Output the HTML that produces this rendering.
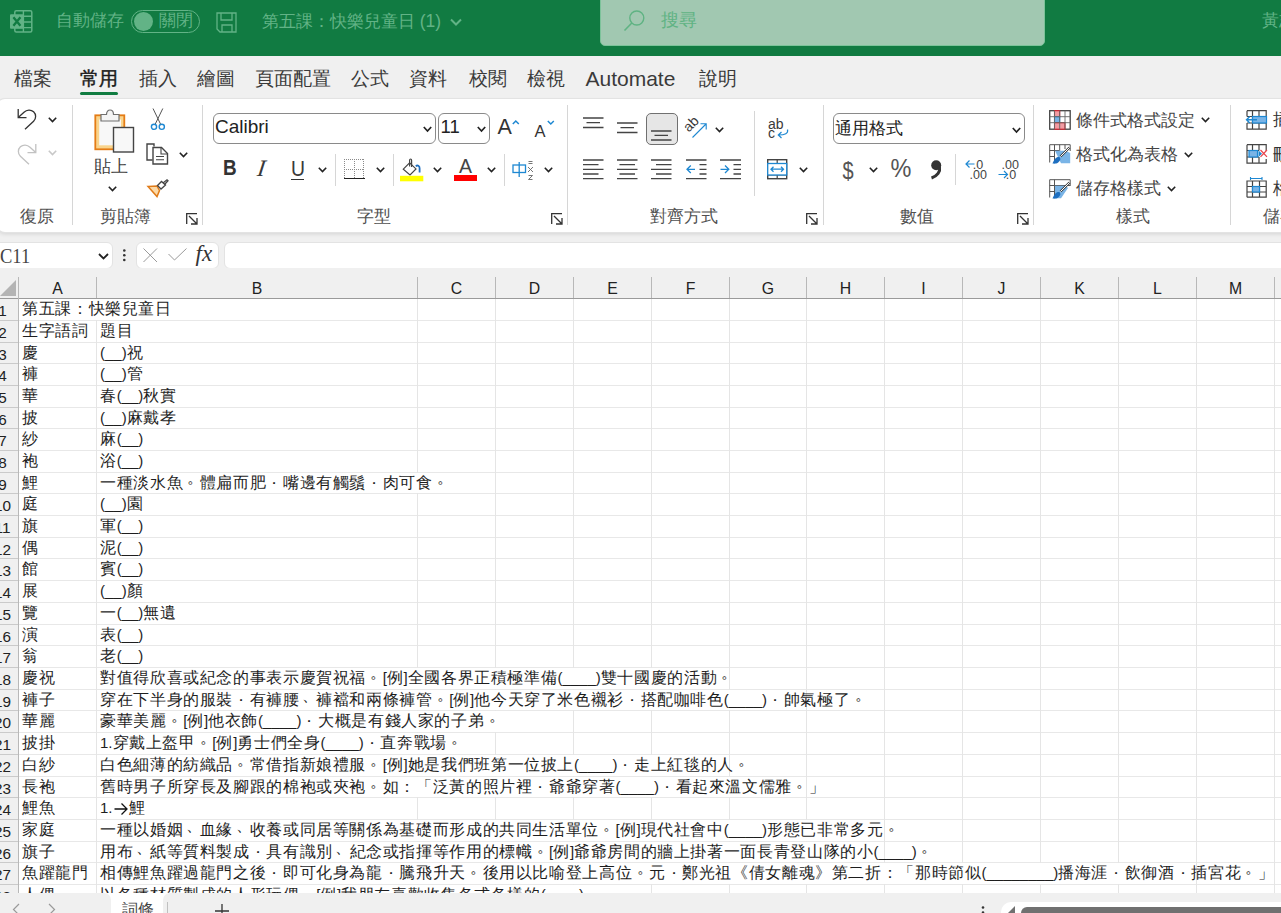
<!DOCTYPE html><html><head><meta charset="utf-8"><style>
*{box-sizing:border-box}
html,body{margin:0;padding:0}
body{width:1281px;height:913px;overflow:hidden;position:relative;background:#f0f0f0;font-family:"Liberation Sans",sans-serif;color:#242424}
.a{position:absolute;white-space:nowrap}
#title{position:absolute;left:0;top:0;width:1281px;height:56px;background:#117b42;overflow:hidden}
#title .t{position:absolute;white-space:nowrap;color:#62b386;font-size:17px;line-height:20px}
#search{position:absolute;left:600px;top:-8px;width:445px;height:53.5px;background:#a1c8b1;border-radius:5px;border:1px solid #7cc39a}
#tabs .tb{position:absolute;top:67.5px;font-size:18.5px;line-height:22px;color:#3a3a3a;white-space:nowrap}
#ribbon{position:absolute;left:-3px;top:99px;width:1300px;height:133px;background:#fff;border-radius:8px;box-shadow:0 0 0 1px #e3e3e3,0 2px 4px rgba(0,0,0,0.12)}
.sep{position:absolute;width:1px;background:#d6d6d6}
.glabel{position:absolute;top:206px;font-size:16.5px;line-height:20px;color:#505050;white-space:nowrap}
.rt{position:absolute;font-size:16.5px;line-height:20px;color:#404040;white-space:nowrap}
svg{position:absolute;overflow:visible}
.combo{position:absolute;top:112.5px;height:31px;border:1px solid #8a8a8a;border-radius:6px;background:#fff}
#fbar .box{position:absolute;top:241.5px;height:27px;background:#fff;border:1px solid #e3e3e3;border-radius:6px}
#colhdr{position:absolute;left:0;top:268px;width:1281px;height:31px;background:#f0f0f0}
#colhdr .ch{position:absolute;top:10.5px;height:20px;font-size:15.8px;line-height:20px;text-align:center;color:#222}
#colhdr .chl{position:absolute;top:9px;width:1px;height:21.5px;background:#b8b8b8}
#colhdr .selall{left:0;top:9px}
#grid{position:absolute;left:0;top:0;width:1281px;height:893px;pointer-events:none}
#sheetbg{position:absolute;left:0;top:298px;width:1281px;height:595px;background:#fff}
.hl{position:absolute;left:0;width:1281px;height:1px;background:#e8e8e8}
.vl{position:absolute;top:299px;width:1px;height:594px;background:#e5e5e5}
.cell{position:absolute;background:#fff;font-size:16px;letter-spacing:.63px;line-height:20px;padding-left:3px;white-space:nowrap;color:#1e1e1e;overflow:visible}
.cell .l{font-size:15px;letter-spacing:0}
.rn{position:absolute;left:-12.5px;width:30px;font-size:15.3px;line-height:24px;text-align:center;background:#f0f0f0;color:#222}
#hdrline{position:absolute;left:0;top:297.5px;width:1281px;height:1.5px;background:#9a9a9a}
#rhline{position:absolute;left:18px;top:298px;width:1px;height:595px;background:#b8b8b8}
#bottom{position:absolute;left:0;top:893px;width:1281px;height:20px;background:#fff}
.p1{position:relative;left:.27em;top:-.33em}
.p2{position:relative;left:0;top:-.28em}
.p3{position:relative;left:.165em;top:-.26em}
.ar{display:inline-block;position:relative;width:16px;height:14px;margin-right:0}
.ar svg{left:0;top:3px}
.rhl{position:absolute;left:0;width:18px;height:1px;background:#cacaca}

</style></head><body>
<div id="title">
  <svg style="left:0;top:0" width="40" height="40" viewBox="0 0 40 40"><rect x="14.8" y="10.8" width="17" height="21.3" rx="1.5" fill="none" stroke="#62b386" stroke-width="1.5"/><path d="M23.4 10.8V32M14.8 16.2H31.8M14.8 22H31.8M14.8 27.6H31.8" stroke="#62b386" stroke-width="1.4"/><rect x="10" y="14.3" width="13.7" height="14.4" rx="1" fill="#62b386"/><path d="M13.4 17.2L20.4 25.8M20.4 17.2L13.4 25.8" stroke="#117b42" stroke-width="2.3"/></svg>
  <div class="t" style="left:56px;top:11px">自動儲存</div>
  <div style="position:absolute;left:131px;top:10px;width:69px;height:23px;border:1.3px solid #62b386;border-radius:12px"></div>
  <div style="position:absolute;left:134px;top:12px;width:19px;height:19px;border-radius:50%;background:#62b386"></div>
  <div class="t" style="left:159px;top:11px">關閉</div>
  <svg style="left:216px;top:12px" width="22" height="21" viewBox="0 0 22 21"><path d="M1 1H20V20H4L1 17Z" fill="none" stroke="#62b386" stroke-width="1.3"/><path d="M5 1V8H16V1M6 20V13H16V20" fill="none" stroke="#62b386" stroke-width="1.3"/></svg>
  <div class="t" style="left:262px;top:11px">第五課：快樂兒童日 <span style="font-size:17.5px">(1)</span></div>
  <svg style="left:450px;top:18px" width="12" height="8" viewBox="0 0 12 8"><path d="M1 1.5L6 6.5L11 1.5" fill="none" stroke="#62b386" stroke-width="2"/></svg>
  <div id="search"></div>
  <svg style="left:620px;top:8px" width="26" height="26" viewBox="0 0 26 26"><circle cx="16.8" cy="10" r="7" fill="none" stroke="#5fb383" stroke-width="1.4"/><path d="M11.8 15L4.5 22.5" stroke="#5fb383" stroke-width="1.6"/></svg>
  <div class="t" style="left:660.5px;top:9.5px;color:#5fb383;font-size:18px">搜尋</div>
  <div class="t" style="left:1262px;top:11px">黃志</div>
</div>
<div id="tabs">
  <div class="tb" style="left:14px">檔案</div>
  <div class="tb" style="left:80px;color:#1a1a1a;-webkit-text-stroke:.45px #1a1a1a">常用</div>
  <div style="position:absolute;left:80px;top:92px;width:38px;height:3px;border-radius:2px;background:#107c41"></div>
  <div class="tb" style="left:139px">插入</div>
  <div class="tb" style="left:197px">繪圖</div>
  <div class="tb" style="left:255px">頁面配置</div>
  <div class="tb" style="left:351px">公式</div>
  <div class="tb" style="left:409px">資料</div>
  <div class="tb" style="left:469px">校閱</div>
  <div class="tb" style="left:527px">檢視</div>
  <div class="tb" style="left:585.5px;font-size:21px">Automate</div>
  <div class="tb" style="left:699px">說明</div>
</div>
<div id="ribbon"></div>
<div id="rb">
<!-- group 1: undo -->
<svg style="left:17px;top:108px" width="20" height="22" viewBox="0 0 20 22"><path d="M1.2 1V9.6H9.5" fill="none" stroke="#333" stroke-width="1.3"/><path d="M1.5 9.3L7 4.2C9.8 1.5 13.9 1.3 16.6 3.8C19.3 6.3 19.3 10.6 16.6 13.2L8 21.3" fill="none" stroke="#333" stroke-width="1.3"/></svg>
<svg style="left:47.5px;top:117px" width="9" height="6" viewBox="0 0 9 6"><path d="M0.8 0.8L4.5 4.5L8.2 0.8" fill="none" stroke="#222" stroke-width="1.6"/></svg>
<svg style="left:17px;top:142.5px" width="20" height="22" viewBox="0 0 20 22"><path d="M18.8 1V9.6H10.5" fill="none" stroke="#c2c2c2" stroke-width="1.3"/><path d="M18.5 9.3L13 4.2C10.2 1.5 6.1 1.3 3.4 3.8C0.7 6.3 0.7 10.6 3.4 13.2L12 21.3" fill="none" stroke="#c2c2c2" stroke-width="1.3"/></svg>
<svg style="left:47.5px;top:150px" width="9" height="6" viewBox="0 0 9 6"><path d="M0.8 0.8L4.5 4.5L8.2 0.8" fill="none" stroke="#c8c8c8" stroke-width="1.6"/></svg>
<div class="glabel" style="left:19.5px">復原</div>
<div class="sep" style="left:72px;top:104.5px;height:120px"></div>
<!-- group 2: clipboard -->
<svg style="left:94px;top:109px" width="41" height="45" viewBox="0 0 41 45"><rect x="1.3" y="6.3" width="29" height="34" fill="#f9d48c" stroke="#e47c16" stroke-width="1.8"/><rect x="5.2" y="10.5" width="21.8" height="25.8" fill="#f8f8f8"/><path d="M7 12V5.5H12.5C12.5 2.6 14.2 1 16 1C17.8 1 19.5 2.6 19.5 5.5H25V12Z" fill="#f4f4f4" stroke="#707070" stroke-width="1.2"/><rect x="19.5" y="18.5" width="20" height="24.5" fill="#f8f8f8" stroke="#444" stroke-width="1.4"/></svg>
<div class="rt" style="left:93.5px;top:155.5px">貼上</div>
<svg style="left:107.5px;top:186px" width="9" height="6" viewBox="0 0 9 6"><path d="M0.8 0.8L4.5 4.5L8.2 0.8" fill="none" stroke="#222" stroke-width="1.6"/></svg>
<svg style="left:150px;top:108px" width="16" height="23" viewBox="0 0 16 23"><path d="M3 0.5L10.5 16M12.8 0.5L5.3 16" stroke="#555" stroke-width="1"/><circle cx="4" cy="18.8" r="2.6" fill="#fff" stroke="#1e88d2" stroke-width="1.4"/><circle cx="11.8" cy="18.8" r="2.6" fill="#fff" stroke="#1e88d2" stroke-width="1.4"/></svg>
<svg style="left:146px;top:142.5px" width="23" height="22" viewBox="0 0 23 22"><path d="M8 3.5V1H1V17H6.5" fill="none" stroke="#444" stroke-width="1.4"/><path d="M7 4.5H15.5L21.5 10.5V21H7Z" fill="#fff" stroke="#444" stroke-width="1.4"/><path d="M15 4.5V11H21.5M10 13.5H18M10 16.8H18" fill="none" stroke="#444" stroke-width="1.1"/></svg>
<svg style="left:178.5px;top:151.5px" width="9" height="6" viewBox="0 0 9 6"><path d="M0.8 0.8L4.5 4.5L8.2 0.8" fill="none" stroke="#222" stroke-width="1.6"/></svg>
<svg style="left:147px;top:178.5px" width="22" height="18" viewBox="0 0 22 18"><path d="M1 7.5L10 7L12.5 11.5L10 17.5Z" fill="#fcd9a6" stroke="#e07b19" stroke-width="1.5"/><path d="M10.5 6.5L14.5 2.5L18.5 6L14 10Z" fill="#fff" stroke="#444" stroke-width="1.3"/><path d="M16 4L20 0.8L21 1.8L17.5 5.5" fill="none" stroke="#444" stroke-width="1.3"/></svg>
<div class="glabel" style="left:100px">剪貼簿</div>
<svg style="left:186px;top:212.5px" width="12" height="12" viewBox="0 0 12 12"><path d="M0.7 11V0.7H11M3 3L11 11M5 11H11V5" fill="none" stroke="#333" stroke-width="1.3"/></svg>
<div class="sep" style="left:202px;top:104.5px;height:120px"></div>
<!-- group 3: font -->
<div class="combo" style="left:213px;width:222.5px"></div>
<div class="rt" style="left:215px;top:117px;font-size:19px;line-height:20px;color:#222">Calibri</div>
<svg style="left:422.5px;top:125.5px" width="9" height="7" viewBox="0 0 9 7"><path d="M0.8 1L4.5 5L8.2 1" fill="none" stroke="#222" stroke-width="1.7"/></svg>
<div class="combo" style="left:438px;width:52px"></div>
<div class="rt" style="left:440.5px;top:117px;font-size:18.5px;line-height:20px;color:#222">11</div>
<svg style="left:477px;top:125.5px" width="9" height="7" viewBox="0 0 9 7"><path d="M0.8 1L4.5 5L8.2 1" fill="none" stroke="#222" stroke-width="1.7"/></svg>
<div class="rt" style="left:497.5px;top:116px;font-size:21.5px;line-height:22px;color:#333">A</div>
<svg style="left:512px;top:119.5px" width="8" height="5" viewBox="0 0 8 5"><path d="M0.8 4L3.8 1L6.8 4" fill="none" stroke="#1e88d2" stroke-width="1.5"/></svg>
<div class="rt" style="left:534.5px;top:122px;font-size:16.5px;line-height:18px;color:#333">A</div>
<svg style="left:546.5px;top:119.5px" width="8" height="5" viewBox="0 0 8 5"><path d="M0.8 1L3.8 4L6.8 1" fill="none" stroke="#1e88d2" stroke-width="1.5"/></svg>
<div class="rt" style="left:222.5px;top:157px;font-size:22.5px;line-height:22px;font-weight:bold;color:#333;transform:scaleX(.84);transform-origin:0 0">B</div>
<div class="rt" style="left:256px;top:157px;font-size:23.5px;line-height:22px;font-family:'Liberation Serif',serif;font-style:italic;color:#3a3a3a;transform:skewX(-8deg);transform-origin:0 100%">I</div>
<div class="rt" style="left:290.5px;top:157.5px;font-size:21.5px;line-height:22px;color:#3a3a3a;transform:scaleX(.9);transform-origin:0 0">U</div>
<div style="position:absolute;left:290.5px;top:178.5px;width:13.5px;height:1.3px;background:#333"></div>
<svg style="left:318px;top:167px" width="9" height="6" viewBox="0 0 9 6"><path d="M0.8 0.8L4.5 4.5L8.2 0.8" fill="none" stroke="#222" stroke-width="1.6"/></svg>
<div class="sep" style="left:335px;top:154px;height:31.5px"></div>
<svg style="left:344px;top:159px" width="21" height="21" viewBox="0 0 21 21" shape-rendering="crispEdges"><path d="M0 0.5H20M0.5 0V19M10.5 0V19M19.5 0V19M0 10.5H20" fill="none" stroke="#8a8a8a" stroke-width="1" stroke-dasharray="1 1"/><path d="M0 19.5H20.5" stroke="#222" stroke-width="1.6"/></svg>
<svg style="left:375.5px;top:167px" width="9" height="6" viewBox="0 0 9 6"><path d="M0.8 0.8L4.5 4.5L8.2 0.8" fill="none" stroke="#222" stroke-width="1.6"/></svg>
<div class="sep" style="left:393px;top:154px;height:31.5px"></div>
<svg style="left:400px;top:157.5px" width="24" height="24" viewBox="0 0 24 24"><path d="M3.3 11.1L9.6 4.8L16 10.9L10 17Z" fill="#fff" stroke="#444" stroke-width="1.2"/><path d="M9.6 8.5V2.2C9.6 0.6 11.6 0.6 11.6 2.2V9" fill="none" stroke="#444" stroke-width="1.2"/><path d="M15.8 8.2C17.5 6.8 19.8 7.8 19.6 10.5V14.5" fill="none" stroke="#1e6fc0" stroke-width="1.8"/><rect x="0" y="17.8" width="23.3" height="5.5" fill="#ffff00"/></svg>
<svg style="left:432.5px;top:167px" width="9" height="6" viewBox="0 0 9 6"><path d="M0.8 0.8L4.5 4.5L8.2 0.8" fill="none" stroke="#222" stroke-width="1.6"/></svg>
<div class="rt" style="left:459px;top:156px;font-size:19.5px;line-height:20px;color:#444">A</div>
<div style="position:absolute;left:454px;top:175.3px;width:23px;height:5.5px;background:#ff0000"></div>
<svg style="left:486.5px;top:167px" width="9" height="6" viewBox="0 0 9 6"><path d="M0.8 0.8L4.5 4.5L8.2 0.8" fill="none" stroke="#222" stroke-width="1.6"/></svg>
<div class="sep" style="left:504px;top:154px;height:31.5px"></div>
<svg style="left:512px;top:160px" width="23" height="21" viewBox="0 0 23 21"><rect x="1" y="5" width="12.5" height="7.5" fill="none" stroke="#1e88d2" stroke-width="1.3"/><path d="M7.2 2V17" stroke="#1e88d2" stroke-width="1.3"/><path d="M16.5 1.5H20.5M16.5 3.5H20.5M16 7L21 12M21 7L16 12M16.5 15.5L20.5 15.5L16.5 19.5H20.5" fill="none" stroke="#666" stroke-width="0.9"/></svg>
<svg style="left:543.5px;top:167px" width="9" height="6" viewBox="0 0 9 6"><path d="M0.8 0.8L4.5 4.5L8.2 0.8" fill="none" stroke="#222" stroke-width="1.6"/></svg>
<div class="glabel" style="left:356.5px">字型</div>
<svg style="left:550.5px;top:212.5px" width="12" height="12" viewBox="0 0 12 12"><path d="M0.7 11V0.7H11M3 3L11 11M5 11H11V5" fill="none" stroke="#333" stroke-width="1.3"/></svg>
<div class="sep" style="left:567px;top:104.5px;height:120px"></div>
<!-- group 4: alignment -->
<svg style="left:582.5px;top:116.5px" width="21" height="12" viewBox="0 0 21 12"><path d="M0 1H20.5M3.5 5.7H17M0 10.5H20.5" stroke="#444" stroke-width="1.3"/></svg>
<svg style="left:617px;top:122px" width="21" height="12" viewBox="0 0 21 12"><path d="M0 1H20.5M3.5 5.7H17M0 10.5H20.5" stroke="#444" stroke-width="1.3"/></svg>
<div style="position:absolute;left:646px;top:112.5px;width:31.5px;height:32px;border:1.3px solid #707070;border-radius:5px;background:#e6e6e6"></div>
<svg style="left:651px;top:129.5px" width="21" height="12" viewBox="0 0 21 12"><path d="M0 1H20.5M3.5 5.4H17M0 10H20.5" stroke="#444" stroke-width="1.3"/></svg>
<svg style="left:685.5px;top:117.5px" width="22" height="21" viewBox="0 0 22 21"><text x="0" y="0" font-family="Liberation Sans" font-size="14" fill="#3a3a3a" transform="translate(2.8 14.8) rotate(-45)">ab</text><path d="M6.5 19.5L20 6M14.5 5.8H20.2V11.5" fill="none" stroke="#1e88d2" stroke-width="1.1"/></svg>
<svg style="left:714.5px;top:126.5px" width="9" height="6" viewBox="0 0 9 6"><path d="M0.8 0.8L4.5 4.5L8.2 0.8" fill="none" stroke="#222" stroke-width="1.6"/></svg>
<svg style="left:582.5px;top:159px" width="21" height="21" viewBox="0 0 21 21"><path d="M0 1H20.5M0 5.7H15.5M0 10.3H20.5M0 15H15.5M0 19.7H20.5" stroke="#444" stroke-width="1.3"/></svg>
<svg style="left:617px;top:159px" width="21" height="21" viewBox="0 0 21 21"><path d="M0 1H20.5M2.5 5.7H18M0 10.3H20.5M2.5 15H18M0 19.7H20.5" stroke="#444" stroke-width="1.3"/></svg>
<svg style="left:651px;top:159px" width="21" height="21" viewBox="0 0 21 21"><path d="M0 1H20.5M5 5.7H20.5M0 10.3H20.5M5 15H20.5M0 19.7H20.5" stroke="#444" stroke-width="1.3"/></svg>
<svg style="left:685.5px;top:159px" width="21" height="21" viewBox="0 0 21 21"><path d="M0 1H20.5M13.5 5.7H20.5M13.5 10.3H20.5M13.5 15H20.5M0 19.7H20.5" stroke="#444" stroke-width="1.3"/><path d="M9 10.3H1M4.8 6.5L1 10.3L4.8 14" fill="none" stroke="#1e88d2" stroke-width="1.3"/></svg>
<svg style="left:719.5px;top:159px" width="22" height="21" viewBox="0 0 22 21"><path d="M0 1H21M13.5 5.7H21M13.5 10.3H21M13.5 15H21M0 19.7H21" stroke="#444" stroke-width="1.3"/><path d="M0.5 10.3H9M5 6.5L8.8 10.3L5 14" fill="none" stroke="#1e88d2" stroke-width="1.3"/></svg>
<div class="sep" style="left:754px;top:111px;height:84.5px"></div>
<svg style="left:768px;top:117px" width="22" height="22" viewBox="0 0 22 22"><text x="0" y="12" font-family="Liberation Sans" font-size="14" fill="#3a3a3a">ab</text><text x="0" y="21" font-family="Liberation Sans" font-size="14" fill="#3a3a3a">c</text><path d="M19.5 12.5C20.5 16.5 17 18 10.5 18M13.5 15L10.3 18L13.5 21" fill="none" stroke="#1e88d2" stroke-width="1.2"/></svg>
<svg style="left:767px;top:159px" width="21" height="21" viewBox="0 0 21 21"><rect x="0.7" y="0.7" width="19" height="19" fill="#fff" stroke="#444" stroke-width="1.4"/><path d="M10.2 0.7V4.5M10.2 16V19.7M0.7 4.5H19.7M0.7 16H19.7" fill="none" stroke="#444" stroke-width="1.2"/><rect x="0.7" y="4.5" width="19" height="11.5" fill="#fff" stroke="#1e88d2" stroke-width="1.3"/><path d="M4 10.2H16.5M6.5 7.7L4 10.2L6.5 12.7M14 7.7L16.5 10.2L14 12.7" fill="none" stroke="#1e88d2" stroke-width="1.3"/></svg>
<svg style="left:798.5px;top:167px" width="9" height="6" viewBox="0 0 9 6"><path d="M0.8 0.8L4.5 4.5L8.2 0.8" fill="none" stroke="#222" stroke-width="1.6"/></svg>
<div class="glabel" style="left:649.5px">對齊方式</div>
<svg style="left:806px;top:212.5px" width="12" height="12" viewBox="0 0 12 12"><path d="M0.7 11V0.7H11M3 3L11 11M5 11H11V5" fill="none" stroke="#333" stroke-width="1.3"/></svg>
<div class="sep" style="left:822.5px;top:104.5px;height:120px"></div>
<!-- group 5: number -->
<div class="combo" style="left:832.5px;width:192px"></div>
<div class="rt" style="left:835px;top:118.5px;font-size:17px;color:#222">通用格式</div>
<svg style="left:1011.5px;top:126.5px" width="9" height="7" viewBox="0 0 9 7"><path d="M0.8 1L4.5 5L8.2 1" fill="none" stroke="#222" stroke-width="1.7"/></svg>
<div class="rt" style="left:842.5px;top:157px;font-size:20px;line-height:22px;color:#555;transform:scaleY(1.22);transform-origin:0 0">$</div>
<svg style="left:869px;top:166.5px" width="9" height="6" viewBox="0 0 9 6"><path d="M0.8 0.8L4.5 4.5L8.2 0.8" fill="none" stroke="#222" stroke-width="1.6"/></svg>
<div class="rt" style="left:890.5px;top:155.5px;font-size:23.5px;line-height:22px;color:#555;transform:scaleY(1.1);transform-origin:0 0">%</div>
<svg style="left:929.5px;top:160px" width="12" height="19" viewBox="0 0 12 19"><circle cx="6.2" cy="5.3" r="5" fill="#333"/><path d="M9.5 7C10.5 11.5 7.5 16 1.5 18" fill="none" stroke="#333" stroke-width="3"/></svg>
<div class="sep" style="left:955px;top:153.5px;height:31.5px"></div>
<svg style="left:964.5px;top:159px" width="22" height="21" viewBox="0 0 22 21"><path d="M1 5H9.5M4.5 1.5L1 5L4.5 8.5" fill="none" stroke="#1e88d2" stroke-width="1.2"/><text x="7.8" y="9.8" font-family="Liberation Sans" font-size="12.5" fill="#444">.0</text><text x="4.5" y="20" font-family="Liberation Sans" font-size="12.5" fill="#444">.00</text></svg>
<svg style="left:998px;top:159px" width="22" height="21" viewBox="0 0 22 21"><text x="3.5" y="9.8" font-family="Liberation Sans" font-size="12.5" fill="#444">.00</text><path d="M0.5 15.5H9.5M6 12L9.5 15.5L6 19" fill="none" stroke="#1e88d2" stroke-width="1.2"/><text x="7.8" y="20" font-family="Liberation Sans" font-size="12.5" fill="#444">.0</text></svg>
<div class="glabel" style="left:900px">數值</div>
<svg style="left:1016.5px;top:212.5px" width="12" height="12" viewBox="0 0 12 12"><path d="M0.7 11V0.7H11M3 3L11 11M5 11H11V5" fill="none" stroke="#333" stroke-width="1.3"/></svg>
<div class="sep" style="left:1033px;top:104.5px;height:120px"></div>
<!-- group 6: styles -->
<svg style="left:1048.5px;top:109.5px" width="22" height="20" viewBox="0 0 22 20"><rect x="0.7" y="0.7" width="20.5" height="18.5" fill="#fff" stroke="#444" stroke-width="1.3"/><rect x="5.5" y="0.7" width="5.2" height="6" fill="#f29ca3" stroke="#d2232e" stroke-width="1.1"/><rect x="5.5" y="6.7" width="5.2" height="6" fill="#7ab4e6" stroke="#1e88d2" stroke-width="1.1"/><rect x="5.5" y="12.7" width="10.5" height="6.5" fill="#f29ca3" stroke="#d2232e" stroke-width="1.1"/><path d="M5.5 0.7V19.2M10.7 0.7V19.2M16 0.7V19.2M0.7 6.7H21.2M0.7 12.7H21.2" fill="none" stroke="#666" stroke-width="0.9"/></svg>
<div class="rt" style="left:1076px;top:111px;font-size:17px;color:#444">條件式格式設定</div>
<svg style="left:1200.5px;top:117px" width="9" height="6" viewBox="0 0 9 6"><path d="M0.8 0.8L4.5 4.5L8.2 0.8" fill="none" stroke="#222" stroke-width="1.6"/></svg>
<svg style="left:1048.5px;top:144px" width="22" height="21" viewBox="0 0 22 21"><path d="M0.7 18.5V0.7H21.2V7M5.5 0.7V18M10.7 0.7V8M16 0.7V5M0.7 6.5H10M0.7 12.5H6" fill="none" stroke="#555" stroke-width="1"/><path d="M6 6.8H16.5L21.2 9V19.2H12Z" fill="#7ab4e6"/><path d="M20.5 3.5L11.5 12.5" stroke="#444" stroke-width="2.4"/><path d="M20.5 3.5L11.5 12.5" stroke="#fff" stroke-width="1"/><path d="M10.5 13C7 12.5 5.5 15 3.5 19.5C6.5 20 10 19.5 11.5 15Z" fill="#1e6fc0"/></svg>
<div class="rt" style="left:1076px;top:144.5px;font-size:17px;color:#444">格式化為表格</div>
<svg style="left:1183.5px;top:151.5px" width="9" height="6" viewBox="0 0 9 6"><path d="M0.8 0.8L4.5 4.5L8.2 0.8" fill="none" stroke="#222" stroke-width="1.6"/></svg>
<svg style="left:1048.5px;top:178.5px" width="22" height="21" viewBox="0 0 22 21"><path d="M0.7 18.5V0.7H21.2V7M5.5 0.7V18M0.7 6.5H21M0.7 12.5H6" fill="none" stroke="#555" stroke-width="1"/><path d="M6 6.8H16.5L19 9L12 19.2H6Z" fill="#7ab4e6"/><path d="M20.5 3.5L11.5 12.5" stroke="#444" stroke-width="2.4"/><path d="M20.5 3.5L11.5 12.5" stroke="#fff" stroke-width="1"/><path d="M10.5 13C7 12.5 5.5 15 3.5 19.5C6.5 20 10 19.5 11.5 15Z" fill="#1e6fc0"/></svg>
<div class="rt" style="left:1076px;top:179px;font-size:17px;color:#444">儲存格樣式</div>
<svg style="left:1166.5px;top:186px" width="9" height="6" viewBox="0 0 9 6"><path d="M0.8 0.8L4.5 4.5L8.2 0.8" fill="none" stroke="#222" stroke-width="1.6"/></svg>
<div class="glabel" style="left:1115.5px">樣式</div>
<div class="sep" style="left:1230px;top:104.5px;height:120px"></div>
<!-- group 7: cells -->
<svg style="left:1244.5px;top:109.5px" width="23" height="20" viewBox="0 0 23 20"><path d="M2 0.7H21.2V19.2H2V13M2 0.7V6.5M7.5 0.7V19.2M14 0.7V19.2M2 6.5H21.2M2 13H21.2" fill="none" stroke="#444" stroke-width="1.2"/><rect x="7.5" y="6.5" width="14" height="6.5" fill="#7ab4e6" stroke="#1e88d2" stroke-width="1.2"/><path d="M12 9.8H1.5M4.8 6.5L1.5 9.8L4.8 13" fill="none" stroke="#1e88d2" stroke-width="1.4"/></svg>
<div class="rt" style="left:1272.5px;top:110px;font-size:17px;color:#333">插</div>
<svg style="left:1244.5px;top:144px" width="23" height="20" viewBox="0 0 23 20"><path d="M2 0.7H21.2V7M2 0.7V19.2H21.2V15M7.5 0.7V19.2M14 0.7V6.5M14 13V19.2M2 6.5H14M2 13H14" fill="none" stroke="#444" stroke-width="1.2"/><rect x="4" y="6.5" width="8.5" height="6.5" fill="#7ab4e6" stroke="#1e88d2" stroke-width="1.2"/><path d="M13.5 6.5L17 9.8L13.5 13" fill="#1e88d2"/><path d="M15.5 6L22 12.8M22 6L15.5 12.8" stroke="#e8434b" stroke-width="1.2"/></svg>
<div class="rt" style="left:1272.5px;top:144.5px;font-size:17px;color:#333">刪</div>
<svg style="left:1244.5px;top:176.5px" width="23" height="21" viewBox="0 0 23 21"><path d="M2 20.2V4H21.2V20.2H2M7.5 4V20.2M14.5 4V20.2M2 9.5H21.2M2 15H21.2" fill="none" stroke="#444" stroke-width="1.2"/><rect x="7.5" y="9.5" width="7" height="5.5" fill="#7ab4e6" stroke="#1e88d2" stroke-width="1.2"/><path d="M5.5 1.5H17M5.5 0V3M17 0V3" fill="none" stroke="#1e88d2" stroke-width="1.1"/></svg>
<div class="rt" style="left:1272.5px;top:179px;font-size:17px;color:#333">格</div>
<div class="glabel" style="left:1263px">儲存格</div>
</div>

<div id="fbar">
  <div class="box" style="left:-10px;width:122.5px"></div>
  <div class="a" style="left:0px;top:244.5px;font-family:'Liberation Serif',serif;font-size:21px;line-height:22px;color:#333;transform:scaleX(.88);transform-origin:0 0;color:#444">C11</div>
  <svg style="left:98px;top:253px" width="11" height="7" viewBox="0 0 11 7"><path d="M1 1L5.5 5.5L10 1" fill="none" stroke="#222" stroke-width="1.8"/></svg>
  <svg style="left:122px;top:249px" width="5" height="13" viewBox="0 0 5 13"><circle cx="2.3" cy="1.5" r="1.3" fill="#333"/><circle cx="2.3" cy="6.3" r="1.3" fill="#333"/><circle cx="2.3" cy="11" r="1.3" fill="#333"/></svg>
  <div class="box" style="left:136px;width:83px"></div>
  <svg style="left:143px;top:248px" width="15" height="15" viewBox="0 0 15 15"><path d="M0.5 0.5L14 14M14 0.5L0.5 14" stroke="#9a9a9a" stroke-width="1"/></svg>
  <svg style="left:168px;top:248px" width="19" height="13" viewBox="0 0 19 13"><path d="M0.5 6L6.5 12L18.5 0.5" fill="none" stroke="#9a9a9a" stroke-width="1"/></svg>
  <div class="a" style="left:195.5px;top:241.5px;font-family:'Liberation Serif',serif;font-style:italic;font-size:23px;line-height:24px;color:#333">fx</div>
  <div class="box" style="left:224px;width:1100px;border-radius:6px 0 0 6px"></div>
</div>
<div id="sheetbg"></div>

<div id="colhdr">
<svg class="selall" width="18" height="20" viewBox="0 0 18 20"><path d="M0 19 L16 3 L16 19 Z" fill="#b4b4b4"/></svg>
<div class="ch" style="left:19px;width:77px">A</div>
<div class="chl" style="left:96px"></div>
<div class="ch" style="left:97px;width:320px">B</div>
<div class="chl" style="left:417px"></div>
<div class="ch" style="left:418px;width:77px">C</div>
<div class="chl" style="left:495px"></div>
<div class="ch" style="left:496px;width:77px">D</div>
<div class="chl" style="left:573px"></div>
<div class="ch" style="left:574px;width:77px">E</div>
<div class="chl" style="left:651px"></div>
<div class="ch" style="left:652px;width:77px">F</div>
<div class="chl" style="left:729px"></div>
<div class="ch" style="left:730px;width:76px">G</div>
<div class="chl" style="left:806px"></div>
<div class="ch" style="left:807px;width:77px">H</div>
<div class="chl" style="left:884px"></div>
<div class="ch" style="left:885px;width:77px">I</div>
<div class="chl" style="left:962px"></div>
<div class="ch" style="left:963px;width:77px">J</div>
<div class="chl" style="left:1040px"></div>
<div class="ch" style="left:1041px;width:77px">K</div>
<div class="chl" style="left:1118px"></div>
<div class="ch" style="left:1119px;width:77px">L</div>
<div class="chl" style="left:1196px"></div>
<div class="ch" style="left:1197px;width:77px">M</div>
<div class="chl" style="left:1274px"></div>
<div class="chl" style="left:18px"></div>
</div>
<div id="grid">
<div class="hl" style="top:320px"></div>
<div class="hl" style="top:342px"></div>
<div class="hl" style="top:363px"></div>
<div class="hl" style="top:385px"></div>
<div class="hl" style="top:407px"></div>
<div class="hl" style="top:428px"></div>
<div class="hl" style="top:450px"></div>
<div class="hl" style="top:472px"></div>
<div class="hl" style="top:493px"></div>
<div class="hl" style="top:515px"></div>
<div class="hl" style="top:537px"></div>
<div class="hl" style="top:558px"></div>
<div class="hl" style="top:580px"></div>
<div class="hl" style="top:602px"></div>
<div class="hl" style="top:624px"></div>
<div class="hl" style="top:645px"></div>
<div class="hl" style="top:667px"></div>
<div class="hl" style="top:689px"></div>
<div class="hl" style="top:710px"></div>
<div class="hl" style="top:732px"></div>
<div class="hl" style="top:754px"></div>
<div class="hl" style="top:776px"></div>
<div class="hl" style="top:797px"></div>
<div class="hl" style="top:819px"></div>
<div class="hl" style="top:841px"></div>
<div class="hl" style="top:862px"></div>
<div class="hl" style="top:884px"></div>
<div class="hl" style="top:906px"></div>
<div class="vl" style="left:96px"></div>
<div class="vl" style="left:417px"></div>
<div class="vl" style="left:495px"></div>
<div class="vl" style="left:573px"></div>
<div class="vl" style="left:651px"></div>
<div class="vl" style="left:729px"></div>
<div class="vl" style="left:806px"></div>
<div class="vl" style="left:884px"></div>
<div class="vl" style="left:962px"></div>
<div class="vl" style="left:1040px"></div>
<div class="vl" style="left:1118px"></div>
<div class="vl" style="left:1196px"></div>
<div class="vl" style="left:1274px"></div>
<div class="vl" style="left:1352px"></div>
<div class="cell" style="top:299px;left:19px;width:398px;height:21px">第五課：快樂兒童日</div>
<div class="rn" style="top:299px;height:21px">1</div>
<div class="rhl" style="top:320px"></div>
<div class="cell" style="top:321px;left:19px;width:77px;height:21px">生字語詞</div>
<div class="cell" style="top:321px;left:97px;width:320px;height:21px">題目</div>
<div class="rn" style="top:321px;height:21px">2</div>
<div class="rhl" style="top:342px"></div>
<div class="cell" style="top:343px;left:19px;width:77px;height:20px">慶</div>
<div class="cell" style="top:343px;left:97px;width:320px;height:20px"><span class="l">(__)</span>祝</div>
<div class="rn" style="top:343px;height:20px">3</div>
<div class="rhl" style="top:363px"></div>
<div class="cell" style="top:364px;left:19px;width:77px;height:21px">褲</div>
<div class="cell" style="top:364px;left:97px;width:320px;height:21px"><span class="l">(__)</span>管</div>
<div class="rn" style="top:364px;height:21px">4</div>
<div class="rhl" style="top:385px"></div>
<div class="cell" style="top:386px;left:19px;width:77px;height:21px">華</div>
<div class="cell" style="top:386px;left:97px;width:320px;height:21px">春<span class="l">(__)</span>秋實</div>
<div class="rn" style="top:386px;height:21px">5</div>
<div class="rhl" style="top:407px"></div>
<div class="cell" style="top:408px;left:19px;width:77px;height:20px">披</div>
<div class="cell" style="top:408px;left:97px;width:320px;height:20px"><span class="l">(__)</span>麻戴孝</div>
<div class="rn" style="top:408px;height:20px">6</div>
<div class="rhl" style="top:428px"></div>
<div class="cell" style="top:429px;left:19px;width:77px;height:21px">紗</div>
<div class="cell" style="top:429px;left:97px;width:320px;height:21px">麻<span class="l">(__)</span></div>
<div class="rn" style="top:429px;height:21px">7</div>
<div class="rhl" style="top:450px"></div>
<div class="cell" style="top:451px;left:19px;width:77px;height:21px">袍</div>
<div class="cell" style="top:451px;left:97px;width:320px;height:21px">浴<span class="l">(__)</span></div>
<div class="rn" style="top:451px;height:21px">8</div>
<div class="rhl" style="top:472px"></div>
<div class="cell" style="top:473px;left:19px;width:77px;height:20px">鯉</div>
<div class="cell" style="top:473px;left:97px;width:398px;height:20px">一種淡水魚<span class="p1">。</span>體扁而肥<span class="p2">．</span>嘴邊有觸鬚<span class="p2">．</span>肉可食<span class="p1">。</span></div>
<div class="rn" style="top:473px;height:20px">9</div>
<div class="rhl" style="top:493px"></div>
<div class="cell" style="top:494px;left:19px;width:77px;height:21px">庭</div>
<div class="cell" style="top:494px;left:97px;width:320px;height:21px"><span class="l">(__)</span>園</div>
<div class="rn" style="top:494px;height:21px">10</div>
<div class="rhl" style="top:515px"></div>
<div class="cell" style="top:516px;left:19px;width:77px;height:21px">旗</div>
<div class="cell" style="top:516px;left:97px;width:320px;height:21px">軍<span class="l">(__)</span></div>
<div class="rn" style="top:516px;height:21px">11</div>
<div class="rhl" style="top:537px"></div>
<div class="cell" style="top:538px;left:19px;width:77px;height:20px">偶</div>
<div class="cell" style="top:538px;left:97px;width:320px;height:20px">泥<span class="l">(__)</span></div>
<div class="rn" style="top:538px;height:20px">12</div>
<div class="rhl" style="top:558px"></div>
<div class="cell" style="top:559px;left:19px;width:77px;height:21px">館</div>
<div class="cell" style="top:559px;left:97px;width:320px;height:21px">賓<span class="l">(__)</span></div>
<div class="rn" style="top:559px;height:21px">13</div>
<div class="rhl" style="top:580px"></div>
<div class="cell" style="top:581px;left:19px;width:77px;height:21px">展</div>
<div class="cell" style="top:581px;left:97px;width:320px;height:21px"><span class="l">(__)</span>顏</div>
<div class="rn" style="top:581px;height:21px">14</div>
<div class="rhl" style="top:602px"></div>
<div class="cell" style="top:603px;left:19px;width:77px;height:21px">覽</div>
<div class="cell" style="top:603px;left:97px;width:320px;height:21px">一<span class="l">(__)</span>無遺</div>
<div class="rn" style="top:603px;height:21px">15</div>
<div class="rhl" style="top:624px"></div>
<div class="cell" style="top:625px;left:19px;width:77px;height:20px">演</div>
<div class="cell" style="top:625px;left:97px;width:320px;height:20px">表<span class="l">(__)</span></div>
<div class="rn" style="top:625px;height:20px">16</div>
<div class="rhl" style="top:645px"></div>
<div class="cell" style="top:646px;left:19px;width:77px;height:21px">翁</div>
<div class="cell" style="top:646px;left:97px;width:320px;height:21px">老<span class="l">(__)</span></div>
<div class="rn" style="top:646px;height:21px">17</div>
<div class="rhl" style="top:667px"></div>
<div class="cell" style="top:668px;left:19px;width:77px;height:21px">慶祝</div>
<div class="cell" style="top:668px;left:97px;width:632px;height:21px">對值得欣喜或紀念的事表示慶賀祝福<span class="p1">。</span><span class="l">[</span>例<span class="l">]</span>全國各界正積極準備<span class="l">(____)</span>雙十國慶的活動<span class="p1">。</span></div>
<div class="rn" style="top:668px;height:21px">18</div>
<div class="rhl" style="top:689px"></div>
<div class="cell" style="top:690px;left:19px;width:77px;height:20px">褲子</div>
<div class="cell" style="top:690px;left:97px;width:709px;height:20px">穿在下半身的服裝<span class="p2">．</span>有褲腰<span class="p3">、</span>褲襠和兩條褲管<span class="p1">。</span><span class="l">[</span>例<span class="l">]</span>他今天穿了米色襯衫<span class="p2">．</span>搭配咖啡色<span class="l">(____)</span><span class="p2">．</span>帥氣極了<span class="p1">。</span></div>
<div class="rn" style="top:690px;height:20px">19</div>
<div class="rhl" style="top:710px"></div>
<div class="cell" style="top:711px;left:19px;width:77px;height:21px">華麗</div>
<div class="cell" style="top:711px;left:97px;width:476px;height:21px">豪華美麗<span class="p1">。</span><span class="l">[</span>例<span class="l">]</span>他衣飾<span class="l">(____)</span><span class="p2">．</span>大概是有錢人家的子弟<span class="p1">。</span></div>
<div class="rn" style="top:711px;height:21px">20</div>
<div class="rhl" style="top:732px"></div>
<div class="cell" style="top:733px;left:19px;width:77px;height:21px">披掛</div>
<div class="cell" style="top:733px;left:97px;width:398px;height:21px"><span class="l">1.</span>穿戴上盔甲<span class="p1">。</span><span class="l">[</span>例<span class="l">]</span>勇士們全身<span class="l">(____)</span><span class="p2">．</span>直奔戰場<span class="p1">。</span></div>
<div class="rn" style="top:733px;height:21px">21</div>
<div class="rhl" style="top:754px"></div>
<div class="cell" style="top:755px;left:19px;width:77px;height:21px">白紗</div>
<div class="cell" style="top:755px;left:97px;width:632px;height:21px">白色細薄的紡織品<span class="p1">。</span>常借指新娘禮服<span class="p1">。</span><span class="l">[</span>例<span class="l">]</span>她是我們班第一位披上<span class="l">(____)</span><span class="p2">．</span>走上紅毯的人<span class="p1">。</span></div>
<div class="rn" style="top:755px;height:21px">22</div>
<div class="rhl" style="top:776px"></div>
<div class="cell" style="top:777px;left:19px;width:77px;height:20px">長袍</div>
<div class="cell" style="top:777px;left:97px;width:709px;height:20px">舊時男子所穿長及腳跟的棉袍或夾袍<span class="p1">。</span>如：「泛黃的照片裡<span class="p2">．</span>爺爺穿著<span class="l">(____)</span><span class="p2">．</span>看起來溫文儒雅<span class="p1">。</span>」</div>
<div class="rn" style="top:777px;height:20px">23</div>
<div class="rhl" style="top:797px"></div>
<div class="cell" style="top:798px;left:19px;width:77px;height:21px">鯉魚</div>
<div class="cell" style="top:798px;left:97px;width:320px;height:21px"><span class="l">1.</span><span class="ar"><svg width="16" height="14" viewBox="0 0 16 14"><path d="M1.5 7H14M8.5 1.5L14 7L8.5 12.5" fill="none" stroke="#111" stroke-width="1.3"/></svg></span>鯉</div>
<div class="rn" style="top:798px;height:21px">24</div>
<div class="rhl" style="top:819px"></div>
<div class="cell" style="top:820px;left:19px;width:77px;height:21px">家庭</div>
<div class="cell" style="top:820px;left:97px;width:787px;height:21px">一種以婚姻<span class="p3">、</span>血緣<span class="p3">、</span>收養或同居等關係為基礎而形成的共同生活單位<span class="p1">。</span><span class="l">[</span>例<span class="l">]</span>現代社會中<span class="l">(____)</span>形態已非常多元<span class="p1">。</span></div>
<div class="rn" style="top:820px;height:21px">25</div>
<div class="rhl" style="top:841px"></div>
<div class="cell" style="top:842px;left:19px;width:77px;height:20px">旗子</div>
<div class="cell" style="top:842px;left:97px;width:787px;height:20px">用布<span class="p3">、</span>紙等質料製成<span class="p2">．</span>具有識別<span class="p3">、</span>紀念或指揮等作用的標幟<span class="p1">。</span><span class="l">[</span>例<span class="l">]</span>爺爺房間的牆上掛著一面長青登山隊的小<span class="l">(____)</span><span class="p1">。</span></div>
<div class="rn" style="top:842px;height:20px">26</div>
<div class="rhl" style="top:862px"></div>
<div class="cell" style="top:863px;left:19px;width:77px;height:21px">魚躍龍門</div>
<div class="cell" style="top:863px;left:97px;width:1099px;height:21px">相傳鯉魚躍過龍門之後<span class="p2">．</span>即可化身為龍<span class="p2">．</span>騰飛升天<span class="p1">。</span>後用以比喻登上高位<span class="p1">。</span>元<span class="p2">．</span>鄭光祖《倩女離魂》第二折：「那時節似<span class="l">(________)</span>播海涯<span class="p2">．</span>飲御酒<span class="p2">．</span>插宮花<span class="p1">。</span>」</div>
<div class="rn" style="top:863px;height:21px">27</div>
<div class="rhl" style="top:884px"></div>
<div class="cell" style="top:885px;left:19px;width:77px;height:21px">人偶</div>
<div class="cell" style="top:885px;left:97px;width:554px;height:21px">以各種材質製成的人形玩偶<span class="p1">。</span><span class="l">[</span>例<span class="l">]</span>我朋友喜歡收集各式各樣的<span class="l">(____)</span><span class="p1">。</span></div>
<div class="rn" style="top:885px;height:21px">28</div>
<div class="rhl" style="top:906px"></div>
</div>
<div id="hdrline"></div>
<div id="rhline"></div>
<div id="bottom">
  <div style="position:absolute;left:0;top:0;width:111px;height:20px;background:#f0f0f0;border-top-right-radius:7px"></div>
  <div style="position:absolute;left:163px;top:0;width:1200px;height:20px;background:#f0f0f0;border-top-left-radius:7px"></div>
  <svg style="left:11.5px;top:10px" width="8" height="12" viewBox="0 0 8 12"><path d="M7 1L1.5 6.5L7 12" fill="none" stroke="#9a9a9a" stroke-width="1.2"/></svg>
  <svg style="left:48px;top:10px" width="8" height="12" viewBox="0 0 8 12"><path d="M1 1L6.5 6.5L1 12" fill="none" stroke="#9a9a9a" stroke-width="1.2"/></svg>
  
  <div class="a" style="left:122px;top:7px;font-size:16px;line-height:20px;color:#444">詞條</div>
  <div style="position:absolute;left:167px;top:9px;width:1px;height:12px;background:#c0c0c0"></div>
  <svg style="left:215px;top:11px" width="14" height="14" viewBox="0 0 14 14"><path d="M7 0V14M0 7H14" stroke="#333" stroke-width="1.3"/></svg>
  <svg style="left:981px;top:13px" width="4" height="10" viewBox="0 0 4 10"><circle cx="2" cy="1.5" r="1.3" fill="#333"/><circle cx="2" cy="6.5" r="1.3" fill="#333"/></svg>
  <div style="position:absolute;left:1001px;top:9px;width:300px;height:20px;background:#fff;border-radius:10px"></div>
  <svg style="left:1006px;top:13px" width="10" height="10" viewBox="0 0 10 10"><path d="M9 0L2 7L9 10Z" fill="#707070"/></svg>
  <div style="position:absolute;left:1021px;top:13.5px;width:300px;height:12px;background:#707070;border-radius:6px"></div>
</div>

</body></html>
